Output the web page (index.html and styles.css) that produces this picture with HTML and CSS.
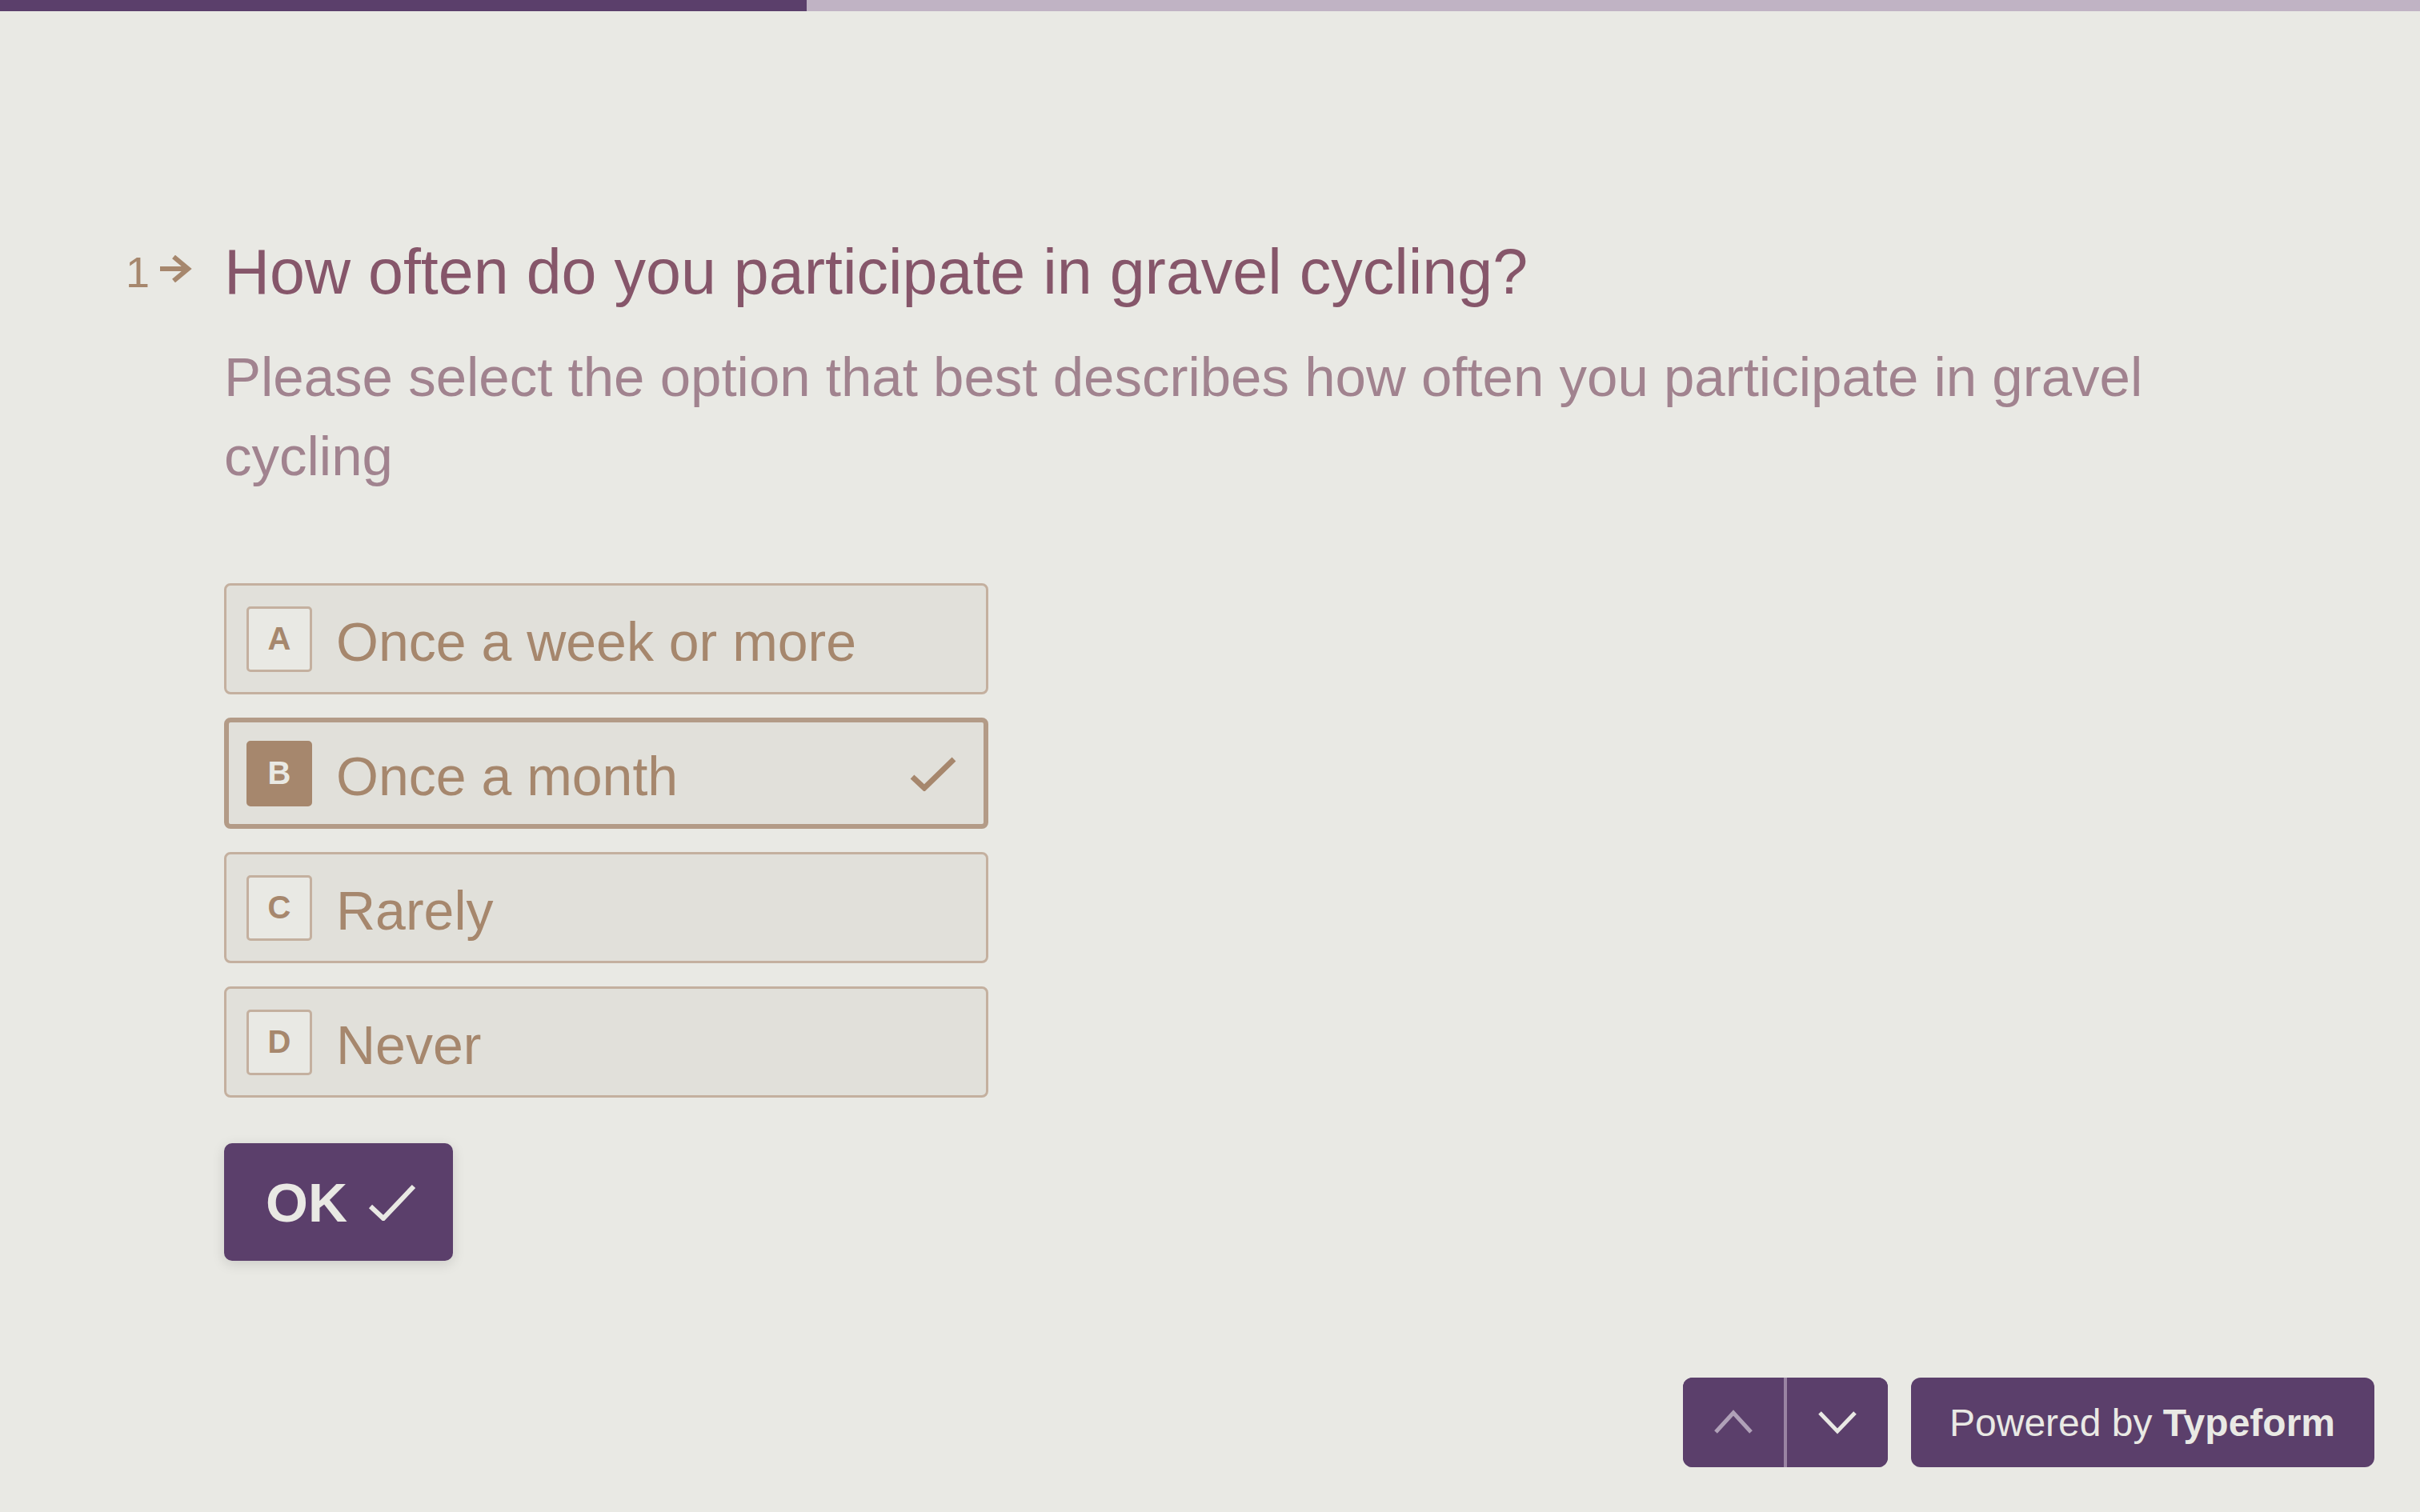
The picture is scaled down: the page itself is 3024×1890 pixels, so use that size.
FILE: index.html
```
<!DOCTYPE html>
<html lang="en">
<head>
<meta charset="utf-8">
<title>Typeform question</title>
<link rel="stylesheet" href="styles.css">
</head>
<body>
<div class="progress"><div class="progress-fill" style="width:33.33%"></div></div>
<main class="form">
  <section class="question">
    <div class="counter">
      <span class="num">1</span>
      <svg class="counter-arrow" width="40" height="34" viewBox="0 0 40 34"><path d="M0 17 H33" stroke="#a6876d" stroke-width="6" fill="none"/><path d="M17 2 L35 17 L17 32" stroke="#a6876d" stroke-width="6" fill="none"/></svg>
    </div>
    <div class="content">
      <h1 class="title">How often do you participate in gravel cycling?</h1>
      <p class="desc">Please select the option that best describes how often you participate in gravel cycling</p>
      <ul class="choices">
        <li class="choice"><span class="key">A</span><span class="label">Once a week or more</span></li>
        <li class="choice selected"><span class="key">B</span><span class="label">Once a month</span>
          <svg class="tick" width="58" height="44" viewBox="0 0 58 44"><path d="M3 26 L18 40 L55 4" stroke="#a6876d" stroke-width="7" fill="none"/></svg>
        </li>
        <li class="choice"><span class="key">C</span><span class="label">Rarely</span></li>
        <li class="choice"><span class="key">D</span><span class="label">Never</span></li>
      </ul>
      <button class="ok"><span>OK</span>
        <svg class="ok-tick" width="60" height="46" viewBox="0 0 60 46"><path d="M3 28 L19 43 L57 3" stroke="#e9e9e4" stroke-width="6" fill="none"/></svg>
      </button>
    </div>
  </section>
</main>
<div class="footer-nav">
  <div class="nav-group">
    <button class="nav-btn">
      <svg width="50" height="32" viewBox="0 0 50 32"><path d="M3 28 L25 4 L47 28" stroke="#b0a1b8" stroke-width="5" fill="none"/></svg>
    </button>
    <span class="nav-divider"></span>
    <button class="nav-btn">
      <svg width="50" height="32" viewBox="0 0 50 32"><path d="M3 4 L25 27 L47 4" stroke="#e9e9e4" stroke-width="5" fill="none"/></svg>
    </button>
  </div>
  <a class="powered">Powered by <b>Typeform</b></a>
</div>
</body>
</html>
```
FILE: styles.css
```
html, body {
  margin: 0;
  padding: 0;
  background: #e9e9e4;
  font-family: "Liberation Sans", Arial, sans-serif;
}
body {
  min-height: 1890px;
}
.progress {
  height: 14px;
  background: #c0b3c4;
}
.progress-fill {
  height: 100%;
  background: #5b3f6b;
}
.form {
  padding: 274px 0 0 157px;
}
.question {
  display: flex;
  align-items: flex-start;
}
.counter {
  width: 123px;
  height: 104px;
  display: flex;
  align-items: center;
  color: #a6876d;
}
.num {
  font-size: 54px;
  line-height: 104px;
}
.counter-arrow {
  margin-left: 13px;
  margin-bottom: 8px;
}
.content {
  width: 2500px;
}
.title {
  margin: 0;
  font-weight: normal;
  font-size: 79px;
  line-height: 104px;
  color: #86566a;
}
.desc {
  margin: 30px 0 0;
  font-size: 69px;
  line-height: 99px;
  color: #a1838f;
}
.choices {
  list-style: none;
  margin: 109px 0 0;
  padding: 0;
  width: 955px;
  display: flex;
  flex-direction: column;
  gap: 29px;
}
.choice {
  box-sizing: border-box;
  height: 139px;
  display: flex;
  align-items: center;
  padding-left: 25px;
  background: #e1e0da;
  border: 3px solid #c4b09f;
  border-radius: 8px;
  color: #a6876d;
}
.choice.selected {
  border: 6px solid #b39b87;
  padding-left: 22px;
}
.key {
  box-sizing: border-box;
  width: 82px;
  height: 82px;
  flex: none;
  display: flex;
  align-items: center;
  justify-content: center;
  border: 3px solid #c4b09f;
  border-radius: 5px;
  background: #e9e9e4;
  font-size: 40px;
  font-weight: bold;
  color: #a6876d;
}
.selected .key {
  background: #a6876d;
  border-color: #a6876d;
  color: #e9e9e4;
}
.label {
  margin-left: 30px;
  padding-top: 6px;
  font-size: 68px;
}
.tick {
  margin-left: auto;
  margin-right: 34px;
}
.ok {
  margin-top: 57px;
  height: 147px;
  display: inline-flex;
  align-items: center;
  padding: 0 46px 0 52px;
  border: none;
  border-radius: 10px;
  background: #5b3f6b;
  color: #e9e9e4;
  font-family: "Liberation Sans", Arial, sans-serif;
  font-size: 68px;
  font-weight: bold;
  box-shadow: 0 4px 16px rgba(0, 0, 0, 0.13);
}
.ok-tick {
  margin-left: 26px;
}
.footer-nav {
  position: fixed;
  right: 57px;
  bottom: 56px;
  display: flex;
  gap: 29px;
}
.nav-group {
  display: flex;
  height: 112px;
  border-radius: 12px;
  overflow: hidden;
  background: #5b3f6b;
}
.nav-btn {
  width: 126px;
  height: 112px;
  border: none;
  background: #5b3f6b;
  display: flex;
  align-items: center;
  justify-content: center;
  padding: 0;
}
.nav-divider {
  width: 4px;
  background: #9a84a3;
}
.powered {
  height: 112px;
  display: flex;
  align-items: center;
  padding: 0 49px 0 48px;
  border-radius: 12px;
  background: #5b3f6b;
  color: #e9e9e4;
  font-size: 48px;
  white-space: pre;
}
.powered b {
  font-weight: bold;
}
```
